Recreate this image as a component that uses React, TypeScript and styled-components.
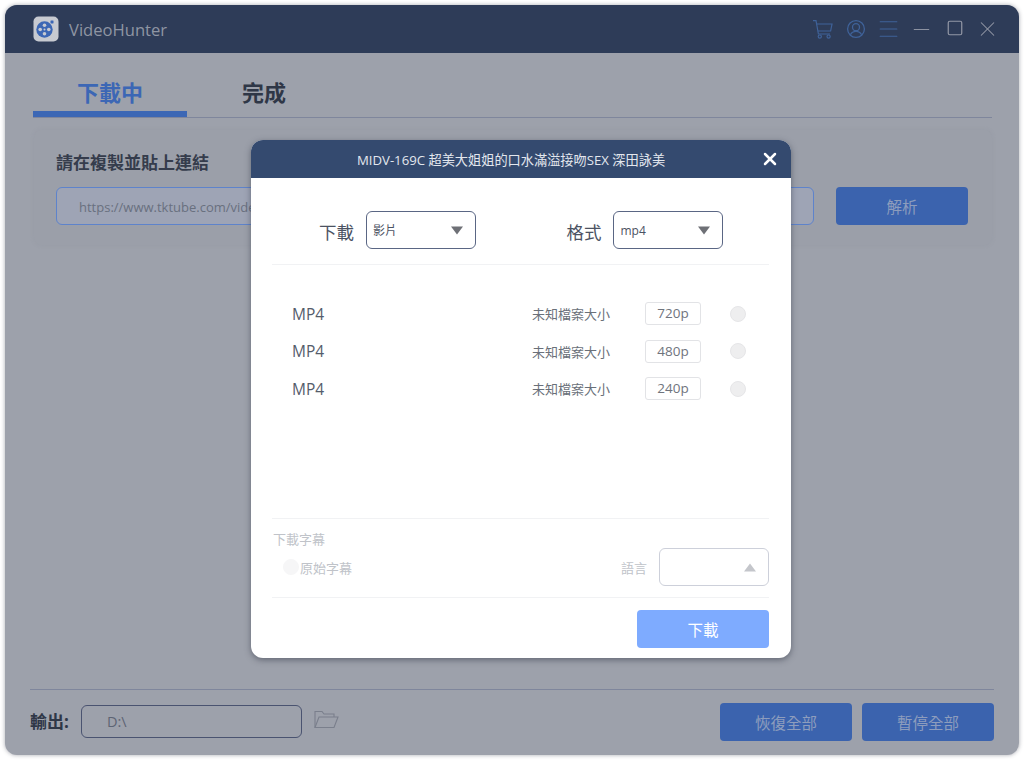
import React from 'react';
import styled, { createGlobalStyle } from 'styled-components';
import { Menu, Minus, Square, X } from 'lucide-react';

const GlobalStyle = createGlobalStyle`
  html, body {
    margin: 0;
    width: 1024px;
    height: 760px;
    overflow: hidden;
    background: #ffffff;
    font-family: "Open Sans", "Noto Sans CJK TC", sans-serif;
  }
  * { box-sizing: border-box; }
`;

const Window = styled.div`
  position: relative;
  margin: 5px;
  width: 1014px;
  height: 750px;
  display: flex;
  flex-direction: column;
  border-radius: 12px;
  overflow: hidden;
  background: #9da1ab;
  box-shadow: 0 0 4px rgba(60, 65, 80, 0.45);
`;

const TitleBar = styled.header`
  height: 48px;
  flex: none;
  display: flex;
  align-items: center;
  padding: 0 28px;
  background: #2e3c58;
`;

const AppName = styled.span`
  margin-left: 10px;
  font-size: 16.6px;
  color: #8f95a3;
`;

const WindowIcons = styled.div`
  margin-left: auto;
  display: flex;
  align-items: center;
  gap: 8px;
  margin-right: -9px;
`;

const IconSlot = styled.span<{ $color?: string; $lift?: number }>`
  display: flex;
  width: 25px;
  justify-content: center;
  color: ${({ $color }) => $color || '#3f6299'};
  margin-top: ${({ $lift }) => ($lift ? `-${$lift}px` : '0')};
`;

const Tabs = styled.nav`
  flex: none;
  height: 65px;
  margin: 0 27px 0 28px;
  display: flex;
  border-bottom: 1px solid #7f869c;
`;

const Tab = styled.div<{ $active?: boolean }>`
  width: 154px;
  height: 64px;
  padding-top: 23px;
  text-align: center;
  font-size: 22px;
  line-height: 32px;
  font-weight: 700;
  color: ${({ $active }) => ($active ? '#3c67b5' : '#2f3747')};
  border-bottom: ${({ $active }) => ($active ? '6px solid #3c67b5' : 'none')};
`;

const LinkCard = styled.section`
  flex: none;
  height: 115px;
  margin: 12px 27px 0 29px;
  padding: 20px 24px 0 22px;
  border-radius: 8px;
  background: #9b9fa9;
  box-shadow: 0 0 4px rgba(130, 135, 150, 0.2);
`;

const CardTitle = styled.div`
  font-size: 17px;
  line-height: 26px;
  font-weight: 700;
  color: #353c4c;
`;

const LinkRow = styled.div`
  margin-top: 11px;
  display: flex;
  gap: 22px;
`;

const LinkInput = styled.div`
  flex: 1;
  height: 38px;
  padding-left: 22px;
  border: 1px solid #5e83cb;
  border-radius: 6px;
  font-size: 13px;
  line-height: 38px;
  color: #69707f;
  background: #9ea4b5;
`;

const PrimaryButton = styled.button<{ $light?: boolean }>`
  width: 132px;
  height: 38px;
  padding: 0;
  border: 0;
  border-radius: 4px;
  font-family: inherit;
  font-size: 15.5px;
  color: ${({ $light }) => ($light ? '#ffffff' : '#8d9dbd')};
  background: ${({ $light }) => ($light ? '#7eabff' : '#3b63ae')};
`;

const Footer = styled.footer`
  margin: auto 25px 0;
  height: 66px;
  padding-top: 13px;
  flex: none;
  display: flex;
  align-items: flex-start;
  border-top: 1px solid #7f869c;
`;

const OutputLabel = styled.span`
  margin-top: 7px;
  width: 51px;
  flex: none;
  font-size: 17px;
  line-height: 24px;
  font-weight: 700;
  color: #2f3747;
  white-space: nowrap;
`;

const OutputPath = styled.div`
  margin-top: 2px;
  width: 221px;
  height: 33px;
  padding-left: 25px;
  border: 1px solid #4a5370;
  border-radius: 6px;
  font-size: 14.5px;
  line-height: 31px;
  color: #5d6474;
`;

const FolderButton = styled.span`
  margin: 7px 0 0 12px;
  display: flex;
  color: #7a7f8c;
`;

const FooterActions = styled.div`
  margin-left: auto;
  display: flex;
  gap: 10px;
`;

const Dialog = styled.div`
  position: absolute;
  left: 246px;
  top: 135px;
  width: 540px;
  height: 518px;
  display: flex;
  flex-direction: column;
  border-radius: 12px;
  overflow: hidden;
  background: #ffffff;
  box-shadow: 0 2px 6px rgba(50, 55, 70, 0.55);
`;

const DialogHeader = styled.div`
  position: relative;
  flex: none;
  height: 38px;
  padding-right: 20px;
  text-align: center;
  font-size: 13.2px;
  line-height: 40px;
  color: #e3e7ee;
  background: #344a6f;
`;

const CloseButton = styled.span`
  position: absolute;
  right: 11px;
  top: 9px;
  display: flex;
  color: #ffffff;
`;

const DialogBody = styled.div`
  flex: 1;
  padding: 0 22px 0 21px;
  display: flex;
  flex-direction: column;
`;

const PickerRow = styled.div`
  flex: none;
  height: 87px;
  padding: 33px 0 0 47px;
  display: flex;
  border-bottom: 1px solid #f1f2f4;
`;

const PickerLabel = styled.span`
  width: 46.5px;
  font-size: 17.5px;
  line-height: 42px;
  color: #4b5262;
`;

const Select = styled.div<{ $muted?: boolean }>`
  width: 110px;
  height: 38px;
  padding: 0 12px 0 6.5px;
  display: flex;
  align-items: center;
  justify-content: space-between;
  border: 1px solid ${({ $muted }) => ($muted ? '#cdd0da' : '#5a6684')};
  border-radius: 6px;
  font-size: 12px;
  color: #4b5262;
`;

const Caret = styled.svg`
  flex: none;
`;

const FormatPicker = styled.div`
  margin-left: 91px;
  display: flex;
`;

const QualityList = styled.div`
  flex: none;
  height: 254px;
  padding: 37px 22px 0 20px;
  display: flex;
  flex-direction: column;
  gap: 14px;
  border-bottom: 1px solid #f1f2f4;
`;

const QualityRow = styled.div`
  height: 23.5px;
  display: flex;
  align-items: center;
`;

const QualityFormat = styled.span`
  width: 240px;
  font-size: 15.5px;
  color: #555c6b;
`;

const FileSize = styled.span`
  width: 113px;
  font-size: 13px;
  color: #6a7079;
`;

const Resolution = styled.span`
  width: 56px;
  height: 23px;
  border: 1px solid #e2e3e6;
  border-radius: 3px;
  text-align: center;
  font-size: 13.5px;
  line-height: 20px;
  color: #6f747d;
`;

const RadioDot = styled.span<{ $faint?: boolean }>`
  flex: none;
  width: 16px;
  height: 16px;
  border-radius: 50%;
  background: ${({ $faint }) => ($faint ? '#f6f6f7' : '#eeeeef')};
  border: 1px solid ${({ $faint }) => ($faint ? '#f6f6f7' : '#e6e6e8')};
`;

const QualityRadio = styled(RadioDot)`
  margin-left: 29px;
`;

const SubtitleSection = styled.div`
  flex: none;
  height: 79px;
  padding: 11px 0 0 1px;
  border-bottom: 1px solid #f1f2f4;
`;

const SubtitleTitle = styled.div`
  font-size: 13px;
  line-height: 18px;
  color: #c0c3c9;
`;

const SubtitleRow = styled.div`
  margin-top: 0;
  padding-left: 10px;
  display: flex;
  align-items: center;
  font-size: 13px;
  color: #c0c3c9;
`;

const SubtitleName = styled.span`
  margin-left: 1px;
`;

const LanguageLabel = styled.span`
  margin-left: auto;
  margin-right: 12px;
`;

const DialogActions = styled.div`
  margin-top: 12px;
  display: flex;
  justify-content: flex-end;
`;

const AppLogo = () => (
  <svg width="26" height="26" viewBox="0 0 26 26" style={{ flex: 'none' }}>
    <rect x="0.5" y="0.5" width="25" height="25" rx="5" fill="#c7cad1" />
    <circle cx="11.5" cy="13.5" r="8.2" fill="#3c67b5" />
    <circle cx="19" cy="6" r="2" fill="#3c67b5" stroke="#c7cad1" strokeWidth="0.6" />
    <circle cx="11.5" cy="13.5" r="1" fill="#c7cad1" />
    <circle cx="11.5" cy="9.2" r="1.8" fill="#c7cad1" />
    <circle cx="11.5" cy="17.8" r="1.8" fill="#c7cad1" />
    <circle cx="7.2" cy="13.5" r="1.8" fill="#c7cad1" />
    <circle cx="15.8" cy="13.5" r="1.8" fill="#c7cad1" />
  </svg>
);

const CartIcon = () => (
  <svg width="20" height="19" viewBox="0 0 20 19" fill="none" stroke="currentColor" strokeWidth="1.2">
    <path d="M0 0.6 H3 L5.4 14 H17" />
    <path d="M3.6 4 H19 L17.6 11 H4.8" />
    <circle cx="6.8" cy="16.6" r="1.6" />
    <circle cx="15.6" cy="16.6" r="1.6" />
  </svg>
);

const UserIcon = () => (
  <svg width="20" height="20" viewBox="0 0 20 20" fill="none" stroke="currentColor" strokeWidth="1.3">
    <circle cx="10" cy="10" r="8.4" />
    <circle cx="10" cy="8.2" r="3.5" />
    <path d="M4.4 15.8 C5.6 13.4 7.6 12.4 10 12.4 C12.4 12.4 14.4 13.4 15.6 15.8" />
  </svg>
);

const FolderIcon = () => (
  <svg width="25" height="19" viewBox="0 0 25 19" fill="none" stroke="currentColor" strokeWidth="1.1">
    <path d="M1 17.5 V1.5 H8 L10 4 H20 V7" />
    <path d="M1 17.5 L5 7 H24 L20 17.5 Z" />
  </svg>
);

const CaretIcon: React.FC<{ color: string; up?: boolean }> = ({ color, up }) => (
  <Caret width="12" height="9" viewBox="0 0 12 9">
    <path d={up ? 'M6 0.5 L12 8.5 H0 Z' : 'M0 0.5 H12 L6 8.5 Z'} fill={color} />
  </Caret>
);

const qualities = ['720p', '480p', '240p'];

const App: React.FC = () => {
  return (
    <>
      <GlobalStyle />
      <Window>
        <TitleBar>
          <AppLogo />
          <AppName>VideoHunter</AppName>
          <WindowIcons>
            <IconSlot><CartIcon /></IconSlot>
            <IconSlot><UserIcon /></IconSlot>
            <IconSlot><Menu size={26} strokeWidth={1.1} /></IconSlot>
            <IconSlot $color="#9398a6"><Minus size={29} strokeWidth={0.9} /></IconSlot>
            <IconSlot $color="#9398a6" $lift={3}><Square size={18} strokeWidth={1.6} /></IconSlot>
            <IconSlot $color="#9398a6"><X size={26} strokeWidth={1} /></IconSlot>
          </WindowIcons>
        </TitleBar>

        <Tabs>
          <Tab $active>下載中</Tab>
          <Tab>完成</Tab>
        </Tabs>

        <LinkCard>
          <CardTitle>請在複製並貼上連結</CardTitle>
          <LinkRow>
            <LinkInput>https://www.tktube.com/videos/</LinkInput>
            <PrimaryButton>解析</PrimaryButton>
          </LinkRow>
        </LinkCard>

        <Footer>
          <OutputLabel>輸出:</OutputLabel>
          <OutputPath>D:\</OutputPath>
          <FolderButton><FolderIcon /></FolderButton>
          <FooterActions>
            <PrimaryButton>恢復全部</PrimaryButton>
            <PrimaryButton>暫停全部</PrimaryButton>
          </FooterActions>
        </Footer>

        <Dialog>
          <DialogHeader>
            MIDV-169C 超美大姐姐的口水滿溢接吻SEX 深田詠美
            <CloseButton><X size={20} strokeWidth={3} /></CloseButton>
          </DialogHeader>
          <DialogBody>
            <PickerRow>
              <PickerLabel>下載</PickerLabel>
              <Select>影片<CaretIcon color="#6e7076" /></Select>
              <FormatPicker>
                <PickerLabel>格式</PickerLabel>
                <Select>mp4<CaretIcon color="#6e7076" /></Select>
              </FormatPicker>
            </PickerRow>

            <QualityList>
              {qualities.map((quality) => (
                <QualityRow key={quality}>
                  <QualityFormat>MP4</QualityFormat>
                  <FileSize>未知檔案大小</FileSize>
                  <Resolution>{quality}</Resolution>
                  <QualityRadio />
                </QualityRow>
              ))}
            </QualityList>

            <SubtitleSection>
              <SubtitleTitle>下載字幕</SubtitleTitle>
              <SubtitleRow>
                <RadioDot $faint />
                <SubtitleName>原始字幕</SubtitleName>
                <LanguageLabel>語言</LanguageLabel>
                <Select $muted><span /><CaretIcon color="#c4c6cb" up /></Select>
              </SubtitleRow>
            </SubtitleSection>

            <DialogActions>
              <PrimaryButton $light>下載</PrimaryButton>
            </DialogActions>
          </DialogBody>
        </Dialog>
      </Window>
    </>
  );
};

export default App;
